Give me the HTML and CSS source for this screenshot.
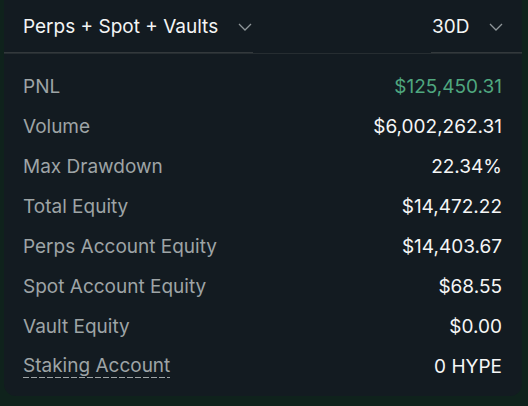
FILE: index.html
```html
<!DOCTYPE html>
<html>
<head>
<meta charset="utf-8">
<link rel="stylesheet" href="styles.css">
</head>
<body>
<div class="card">
  <div class="header">
    <div class="select select-main">
      <span class="select-text">Perps + Spot + Vaults</span>
      <svg class="chev" width="14" height="8" viewBox="0 0 14 8"><path d="M1 1 L7 7 L13 1" fill="none" stroke="#8f9699" stroke-width="1.3"/></svg>
    </div>
    <div class="select select-range">
      <span class="select-text">30D</span>
      <svg class="chev" width="14" height="8" viewBox="0 0 14 8"><path d="M1 1 L7 7 L13 1" fill="none" stroke="#8f9699" stroke-width="1.3"/></svg>
    </div>
  </div>
  <div class="rows">
    <div class="row"><span class="label">PNL</span><span class="value green">$125,450.31</span></div>
    <div class="row"><span class="label">Volume</span><span class="value">$6,002,262.31</span></div>
    <div class="row"><span class="label">Max Drawdown</span><span class="value">22.34%</span></div>
    <div class="row"><span class="label">Total Equity</span><span class="value">$14,472.22</span></div>
    <div class="row"><span class="label">Perps Account Equity</span><span class="value">$14,403.67</span></div>
    <div class="row"><span class="label">Spot Account Equity</span><span class="value">$68.55</span></div>
    <div class="row"><span class="label">Vault Equity</span><span class="value">$0.00</span></div>
    <div class="row"><span class="label dashed">Staking Account</span><span class="value">0 HYPE</span></div>
  </div>
</div>
</body>
</html>
```

FILE: styles.css
```css
html, body {
  margin: 0;
  padding: 0;
}
body {
  width: 528px;
  height: 406px;
  background: #0f221c;
  font-family: "Inter", "Liberation Sans", sans-serif;
  overflow: hidden;
}
.card {
  margin-left: 4px;
  width: 518px;
  height: 396px;
  background: #131b21;
  border-radius: 0 0 12px 12px;
  box-sizing: border-box;
}
.header {
  display: flex;
  justify-content: space-between;
  height: 53px;
  border-bottom: 1px solid #262d31;
  box-sizing: content-box;
}
.select {
  display: flex;
  align-items: center;
  height: 53px;
  padding-top: 2px;
  border-bottom: 1px solid #33393c;
  margin-bottom: -1px;
  box-sizing: border-box;
  color: #f4f5f5;
  font-size: 19px;
}
.select-main {
  width: 249px;
  padding-left: 19px;
}
.select-main .chev {
  margin-left: 20px;
}
.select-range {
  width: 91px;
  padding-left: 1px;
}
.select-range .chev {
  margin-left: 20px;
}
.select-text {
  line-height: 22px;
}
.chev {
  display: block;
}
.rows {
  padding: 12px 20px 10px 19px;
}
.row {
  display: flex;
  justify-content: space-between;
  align-items: center;
  height: 40px;
  font-size: 19px;
}
.label {
  color: #9ea4a6;
}
.value {
  color: #f5f6f6;
}
.green {
  color: #4fa77f;
}
.dashed {
  padding-bottom: 1px;
  background-image: linear-gradient(to right, #9ea4a6 0 6px, transparent 6px 8px);
  background-size: 8px 1px;
  background-repeat: repeat-x;
  background-position: 0 100%;
}
```
